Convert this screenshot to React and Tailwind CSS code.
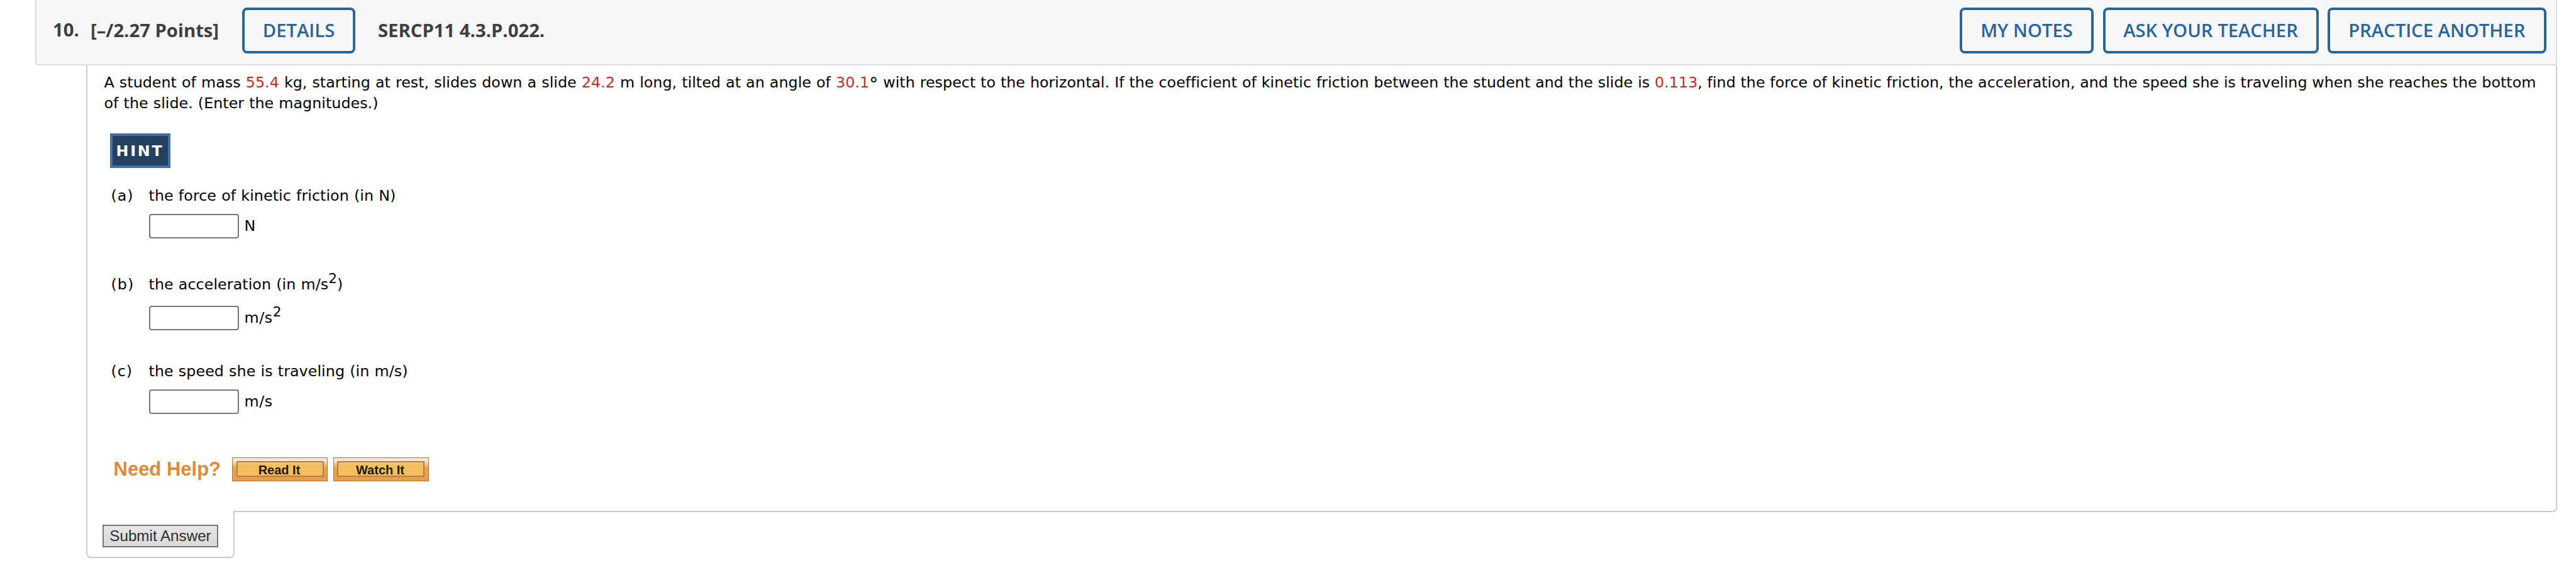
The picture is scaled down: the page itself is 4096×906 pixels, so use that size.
import React from 'react';

const HeaderButton = ({ children, className = '' }) => (
  <button
    className={`h-[73px] shrink-0 rounded-[8px] border-4 border-[#29649b] text-center text-[29.26px] leading-none font-semibold whitespace-nowrap text-[#29649b] ${className}`}
  >
    {children}
  </button>
);

const Value = ({ children }) => <span className="text-[#d0281c]">{children}</span>;

const Squared = () => <span className="align-[10px] text-[21.5px] leading-[0]">2</span>;

const Part = ({ letter, label, unit, gap = 'mt-3', className = '' }) => (
  <div className={`flex ${className}`}>
    <div className="w-[60px] shrink-0 tracking-[1px]">({letter})</div>
    <div>
      <div className="h-[33px] tracking-[0.07px] whitespace-nowrap [word-spacing:0.5px]">{label}</div>
      <div className={`flex h-[39px] items-center gap-[9px] ${gap}`}>
        <input
          type="text"
          className="h-[39px] w-[143px] rounded-[4px] border-2 border-[#767676] bg-white"
        />
        <span className="tracking-[0.6px] whitespace-nowrap">{unit}</span>
      </div>
    </div>
  </div>
);

const HelpButton = ({ children }) => (
  <button className="h-[38.4px] w-[152px] border border-[#a9773c] bg-linear-to-b from-[#f8e6d2] from-12% via-[#efa04b] via-42% to-[#ec9c47] p-[5.5px]">
    <span className="flex h-full items-center justify-center rounded-[1px] border-2 border-[#b17f42] bg-linear-to-b from-[#f2cc8a] to-[#f3bf5c] to-20% pt-[3px] pr-[2px] text-[20px] leading-none font-bold text-[#1d1806]">
      {children}
    </span>
  </button>
);

const App = () => {
  return (
    <div className="h-[906px] w-[4096px] overflow-hidden bg-white pr-[30px] pl-[56px] font-['DejaVu_Sans',sans-serif] text-[23.77px] leading-[33px] text-black">
      {/* Question header */}
      <div className="flex h-[103.5px] items-start rounded-b-[4px] border-x-2 border-b-2 border-[#dcdcdc] bg-[#f7f7f7] pt-3 pr-[15.5px] pl-[26px] font-['Open_Sans',sans-serif] text-[#3e3e3e]">
        <div className="flex h-[73px] flex-1 items-center text-[29.26px] leading-none font-bold whitespace-nowrap">
          <span className="w-[60px] pb-[2px]">10.</span>
          <span className="w-[241px]">[–/2.27 Points]</span>
          <HeaderButton className="w-[180px]">DETAILS</HeaderButton>
          <span className="pl-[36px]">SERCP11 4.3.P.022.</span>
        </div>
        <div className="flex gap-[14.5px]">
          <HeaderButton className="w-[213px]">MY NOTES</HeaderButton>
          <HeaderButton className="w-[343px]">ASK YOUR TEACHER</HeaderButton>
          <HeaderButton className="w-[347.5px]">PRACTICE ANOTHER</HeaderButton>
        </div>
      </div>

      {/* Question body */}
      <div className="ml-[81px] h-[710.5px] rounded-br-[7px] border-r-2 border-b-2 border-l-2 border-[#cacaca] pt-[11px] pl-[26.5px]">
        <p className="tracking-[0.03px] whitespace-nowrap [word-spacing:0.5px]">
          A student of mass <Value>55.4</Value> kg, starting at rest, slides down a slide{' '}
          <Value>24.2</Value> m long, tilted at an angle of <Value>30.1</Value>
          <span className="align-[-3.5px] text-[28px] leading-[0]">°</span>{' '}
          <span className="[word-spacing:0.3px]">
            with respect to the horizontal. If the coefficient of kinetic friction between the
            student and the slide is <Value>0.113</Value>
          </span>
          <span className="[word-spacing:0.1px]">
            , find the force of kinetic friction, the acceleration, and the speed she is traveling
            when she reaches the bottom
          </span>
          <br />
          of the slide. (Enter the magnitudes.)
        </p>

        <button className="mt-[31.5px] ml-[9px] block h-[55px] w-[96px] border-4 border-[#4370a9] bg-[#26415f] pt-[2px] text-center text-[23.77px] leading-none font-bold tracking-[2.8px] text-white">
          HINT
        </button>

        <div className="mt-[27.5px] ml-[11px]">
          <Part letter="a" label="the force of kinetic friction (in N)" unit="N" />
          <Part
            className="mt-[57px]"
            gap="mt-[17px]"
            letter="b"
            label={<>the acceleration (in m/s<Squared />)</>}
            unit={<>m/s<Squared /></>}
          />
          <Part
            className="mt-[49px]"
            letter="c"
            label="the speed she is traveling (in m/s)"
            unit="m/s"
          />
        </div>

        <div className="mt-[69px] ml-[15px] flex items-center font-['Liberation_Sans',sans-serif]">
          <span className="w-[188.5px] text-[31px] font-bold whitespace-nowrap text-[#e08b33]">
            Need Help?
          </span>
          <div className="flex gap-[8.5px]">
            <HelpButton>Read It</HelpButton>
            <HelpButton>Watch It</HelpButton>
          </div>
        </div>
      </div>

      {/* Submit tab hanging below the body */}
      <div className="relative -mt-[2px] ml-[81px] h-[75px] w-[236px] rounded-b-[8px] border-x-2 border-b-2 border-[#cacaca] bg-white pt-[22px] pl-[24px]">
        <button className="block h-[36px] w-[184px] border-2 border-[#767676] bg-linear-to-b from-[#e6e6e6] to-[#d9d9d9] font-['Liberation_Sans',sans-serif] text-[24.2px] leading-none whitespace-nowrap text-[#2e2e2e]">
          Submit Answer
        </button>
      </div>
    </div>
  );
};

export default App;
